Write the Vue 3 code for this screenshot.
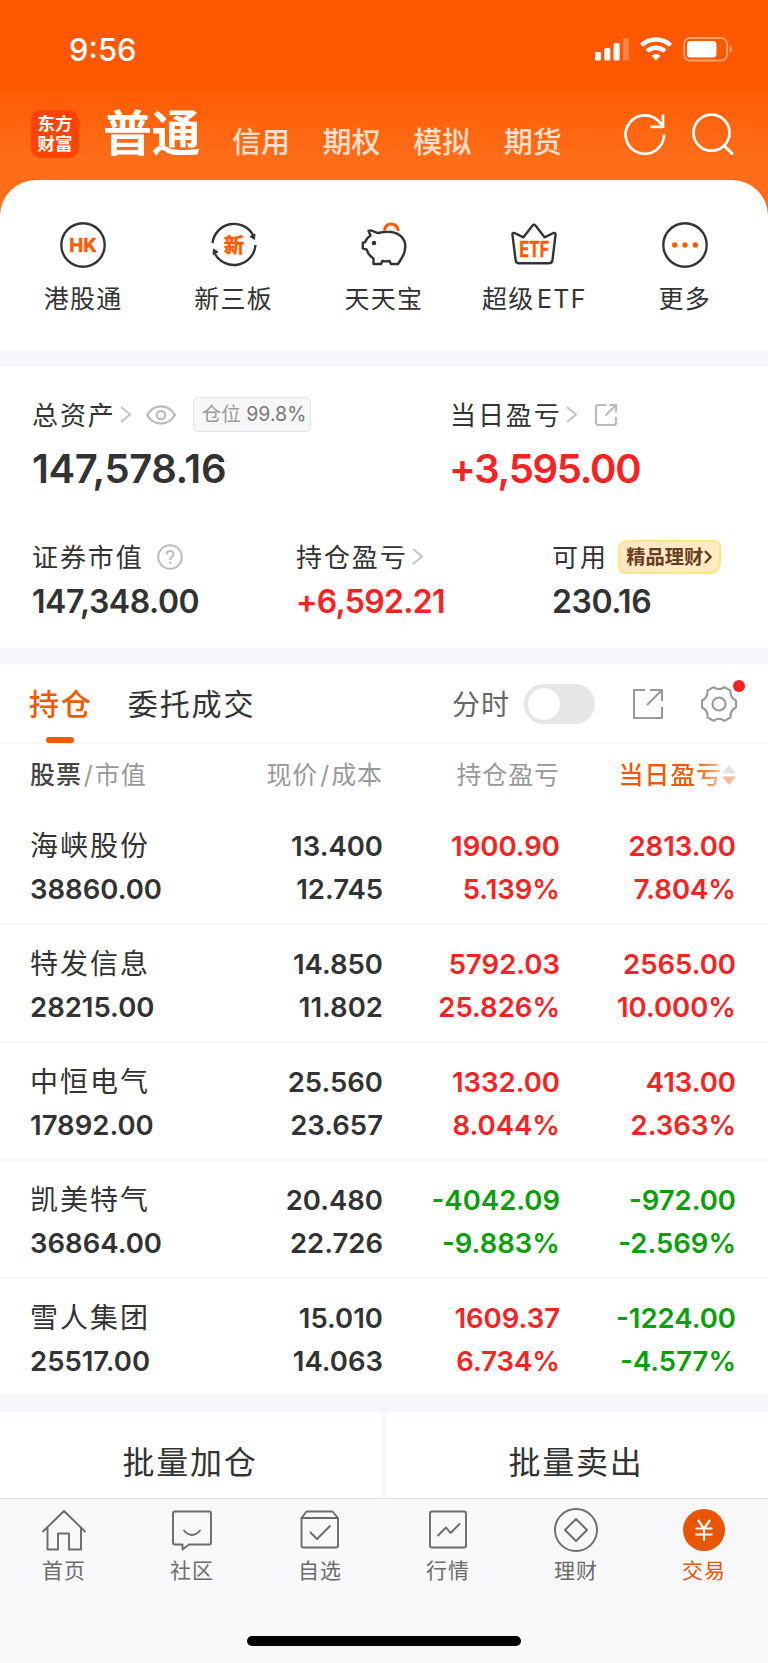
<template>
	<div class="app">
		<header class="top">
			<div class="status">
				<time>9:56</time>
				<svg class="signal" width="34" height="23" viewBox="0 0 34 23" fill="#fff">
					<rect x="0" y="14" width="6" height="8.500" rx="1.500" />
					<rect x="9.300" y="10" width="6" height="12.500" rx="1.500" />
					<rect x="18.600" y="5" width="6" height="17.500" rx="1.500" />
					<rect x="28" y="0" width="6" height="22.500" rx="1.500" opacity=".25" />
				</svg>
				<svg class="wifi" width="32" height="24" viewBox="0 0 32 24">
					<g fill="none" stroke="#fff" stroke-width="4.300">
						<path d="M1.500 8.300A21 21 0 0 1 30.500 8.300" />
						<path d="M7 14.200A13.500 13.500 0 0 1 25 14.200" />
					</g>
					<path d="M16 23.500L11.300 18.800A7 7 0 0 1 20.700 18.800Z" fill="#fff" />
				</svg>
				<svg class="battery" width="50" height="25" viewBox="0 0 50 25">
					<rect x="1" y="1" width="43" height="22.500" rx="6" fill="none" stroke="#fff" stroke-width="1.800" opacity=".45" />
					<rect x="4" y="4" width="29.500" height="16.500" rx="3.500" fill="#fff" />
					<path d="M46.500 8.500Q49 9.500 49 12.200Q49 15 46.500 16Z" fill="#fff" opacity=".45" />
				</svg>
			</div>
			<nav class="accounts">
				<div class="logo"><span>东方</span><span>财富</span></div>
				<strong>普通</strong>
				<a v-for="name of accounts" :key="name">{{name}}</a>
				<svg class="refresh" width="42" height="42" viewBox="0 0 42 42" fill="none" stroke="#fff" stroke-width="2.700">
					<path d="M40 21.500A19.200 19.200 0 1 1 36.500 10.500L39.500 13.500" />
					<path d="M39 1.500V13.800H26.500" />
				</svg>
				<svg class="search" width="43" height="43" viewBox="0 0 43 43" fill="none" stroke="#fff" stroke-width="2.700">
					<circle cx="19.500" cy="19.700" r="18" />
					<path d="M31.500 32L41 41.500" stroke-width="3" />
				</svg>
			</nav>
		</header>

		<section class="shortcuts">
			<a v-for="item of shortcuts" :key="item.icon">
				<svg width="48" height="48" viewBox="0 0 48 48" fill="none" stroke="#333" stroke-width="2.400" stroke-linejoin="round">
					<template v-if="item.icon === 'hk'">
						<circle cx="24" cy="24" r="21.700" />
						<text x="24" y="31" class="icon-text" font-size="19" textLength="27.500" lengthAdjust="spacingAndGlyphs">HK</text>
					</template>
					<template v-else-if="item.icon === 'new'">
						<path d="M2.500 22A21.700 21.700 0 0 1 43 14M45.500 24A21.700 21.700 0 0 1 5 33" />
						<path d="M45 13L44.500 18.500L40 15.500ZM3 33.500L3.500 28L8 31Z" fill="#333" stroke-width="1" />
						<text x="24" y="31.500" class="icon-text" font-size="20.500">新</text>
					</template>
					<template v-else-if="item.icon === 'pig'">
						<path d="M8.500 9.800Q11.500 9 15 11Q17.500 12.600 20.500 11.500Q25 10.500 31 11C40 12 45.500 18 45.300 26Q45 32 42 36.500L38 43H31L29.500 40Q25.500 40.700 22.300 40L21 43H13.500V37.500Q8 34 6.800 28.700L2.800 27.300V21.700L5 21.300Q6.500 17 10.500 14.500Z" />
						<circle cx="14" cy="22" r="2.300" fill="#333" stroke="none" />
						<path d="M24.300 9.700C26 0.500 36.500 1 38.300 9.700" stroke="#ff5a00" stroke-width="3.200" />
					</template>
					<template v-else-if="item.icon === 'etf'">
						<path d="M2.500 14Q2 11.500 4.500 12L13.500 16.300L22.500 4.500Q24 3 25.500 4.500L34.500 16.300L43.500 12Q46 11.500 45.500 14L42.500 39Q42 42.300 39 42.300H9Q6 42.300 5.600 39Z" />
						<text x="24.300" y="35.700" class="icon-text" font-size="21" textLength="30" lengthAdjust="spacingAndGlyphs">ETF</text>
					</template>
					<template v-else>
						<circle cx="24" cy="24" r="21.700" />
						<g fill="#ff5a00" stroke="none">
							<circle cx="13.700" cy="24" r="2.700" />
							<circle cx="24" cy="24" r="2.700" />
							<circle cx="34.300" cy="24" r="2.700" />
						</g>
					</template>
				</svg>
				<span>{{item.label}}</span>
			</a>
		</section>

		<section class="assets">
			<div class="asset total">
				<h3>
					总资产
					<svg class="chevron" viewBox="0 0 11 17"><path d="M1 1L10 8.500L1 16" /></svg>
					<svg class="eye" width="30" height="20" viewBox="0 0 30 20" fill="none" stroke="#bbb" stroke-width="2.200">
						<path d="M1 10C8-1.500 22-1.500 29 10C22 21.500 8 21.500 1 10Z" />
						<circle cx="15" cy="10" r="4.200" />
					</svg>
					<span class="position">仓位 <em>99.8%</em></span>
				</h3>
				<p>147,578.16</p>
			</div>
			<div class="asset total up">
				<h3>
					当日盈亏
					<svg class="chevron" viewBox="0 0 11 17"><path d="M1 1L10 8.500L1 16" /></svg>
					<svg class="share" width="24" height="24" viewBox="0 0 24 24" fill="none" stroke="#bbb" stroke-width="2.200">
						<path d="M12.500 2H4.500Q2 2 2 4.500V19.500Q2 22 4.500 22H19.500Q22 22 22 19.500V14M15.500 2H22V9.500M22 2L11.500 12.500" />
					</svg>
				</h3>
				<p>+3,595.00</p>
			</div>
			<div class="asset">
				<h3>
					证券市值
					<svg class="help" width="26" height="26" viewBox="0 0 26 26" fill="none" stroke="#bbb" stroke-width="2">
						<circle cx="13" cy="13" r="11.800" />
						<path d="M9.700 10.500C9.700 5.800 16.500 5.800 16.500 10.200C16.500 12.800 13.100 13 13.100 16M13.100 17.500V19.700" />
					</svg>
				</h3>
				<p>147,348.00</p>
			</div>
			<div class="asset up">
				<h3>
					持仓盈亏
					<svg class="chevron" viewBox="0 0 11 17"><path d="M1 1L10 8.500L1 16" /></svg>
				</h3>
				<p>+6,592.21</p>
			</div>
			<div class="asset">
				<h3>
					可用
					<span class="wealth">
						精品理财
						<svg width="8" height="14" viewBox="0 0 8 14" fill="none" stroke="#683d22" stroke-width="2.400"><path d="M1 1L6.500 7L1 13" /></svg>
					</span>
				</h3>
				<p>230.16</p>
			</div>
		</section>

		<section class="holdings">
			<div class="tabs">
				<b>持仓</b>
				<a>委托成交</a>
				<label>分时</label>
				<i class="switch"></i>
				<svg class="export" width="32" height="32" viewBox="0 0 32 32" fill="none" stroke="#999" stroke-width="2">
					<path d="M13 2H2V30H30V19M18 2H30V13M30 2L15 17" stroke-linejoin="round" />
				</svg>
				<span class="settings">
					<svg width="38" height="38" viewBox="0 0 38 38" fill="none" stroke="#999" stroke-width="2.100" stroke-linejoin="round">
						<path d="M13.500 2.200Q19 6.200 24.500 2.200L30.500 5.700Q29.800 12.700 36 15.500V22.500Q29.800 25.300 30.500 32.300L24.500 35.800Q19 31.800 13.500 35.800L7.500 32.300Q8.200 25.300 2 22.500V15.500Q8.200 12.700 7.500 5.700Z" />
						<circle cx="19" cy="19" r="6.500" />
					</svg>
				</span>
			</div>
			<div class="row head">
				<div><b>股票</b><s>/</s>市值</div>
				<div>现价<s>/</s>成本</div>
				<div>持仓盈亏</div>
				<div class="sorted">
					<span>当日盈亏</span>
					<svg width="14" height="22" viewBox="0 0 14 22"><path d="M7 1L14 9.500H0Z" fill="#e3e3e3" /><path d="M7 21L14 12.500H0Z" fill="#fbbd9a" /></svg>
				</div>
			</div>
			<div class="row" v-for="stock of stocks" :key="stock.name">
				<div><span class="name">{{stock.name}}</span><br />{{stock.value}}</div>
				<div>{{stock.price}}<br />{{stock.cost}}</div>
				<div :class="trend(stock.profit)">{{stock.profit[0]}}<br />{{stock.profit[1]}}</div>
				<div :class="trend(stock.today)">{{stock.today[0]}}<br />{{stock.today[1]}}</div>
			</div>
		</section>

		<section class="batch">
			<button>批量加仓</button>
			<button>批量卖出</button>
		</section>

		<footer>
			<nav>
				<a v-for="item of menu" :key="item.label" :class="{active: item.active}">
					<svg width="46" height="46" viewBox="0 0 46 46" fill="none" stroke="#6b6b6d" stroke-width="1.900" stroke-linejoin="round">
						<path v-for="d of item.paths" :key="d" :d="d" />
						<circle v-if="item.ring" cx="23" cy="23" r="21" />
						<template v-if="item.active">
							<circle cx="23" cy="23" r="21" fill="#ea5504" stroke="none" />
							<path d="M17 13L23 21.500L29 13M23 21V34M14.500 21.500H31.500M14.500 27.500H31.500" stroke="#fff" stroke-width="2.200" />
						</template>
					</svg>
					<span>{{item.label}}</span>
				</a>
			</nav>
			<div class="home-bar"></div>
		</footer>
	</div>
</template>

<style>
	body
	{
		margin: 0;
		background: #f8f8fb;
	}
</style>

<style scoped>
	.app
	{
		width: 768px;
		height: 1663px;
		overflow: hidden;
		display: flex;
		flex-direction: column;
		background: #f6f7fa;
		color: #333;
		font-family: Inter, "Noto Sans CJK SC", sans-serif;
	}

	.app *
	{
		box-sizing: border-box;
	}

	svg
	{
		display: block;
		flex: none;
	}

	h3, p
	{
		margin: 0;
		font-weight: normal;
	}

	.top
	{
		height: 216px;
		flex: none;
		background: linear-gradient(#ff5800 76px, #ff6d18 158px);
		color: #fff;
	}

	.status
	{
		height: 98px;
		padding: 0 35px 0 69px;
		display: flex;
		align-items: center;
	}

	.status time
	{
		flex: 1;
		font-size: 31px;
		font-weight: 500;
	}

	.wifi
	{
		margin: 0 11px;
	}

	.accounts
	{
		height: 72px;
		padding: 0 33px 0 31px;
		display: flex;
		align-items: center;
	}

	.logo
	{
		width: 48px;
		height: 48px;
		border-radius: 10px;
		background: #ff4300;
		display: flex;
		flex-direction: column;
		justify-content: center;
		align-items: center;
		font-size: 17.500px;
		font-weight: bold;
		line-height: 20px;
	}

	.accounts strong
	{
		margin: 0 32px 0 24px;
		font-size: 49px;
		line-height: 60px;
		letter-spacing: -0.5px;
	}

	.accounts a
	{
		width: 58px;
		margin: 17px 32.600px 0 0;
		font-size: 29px;
		line-height: 40px;
		font-weight: 500;
		white-space: nowrap;
		color: #ffe0cf;
	}

	.refresh
	{
		margin-left: auto;
	}

	.search
	{
		margin-left: 26px;
	}

	.shortcuts
	{
		height: 171px;
		flex: none;
		margin-top: -36px;
		padding: 41px 8px 0;
		border-radius: 36px 36px 0 0;
		background: #fff;
		display: grid;
		grid-template-columns: repeat(5, 150.400px);
	}

	.shortcuts a
	{
		display: flex;
		flex-direction: column;
		align-items: center;
	}

	.shortcuts span
	{
		margin-top: 12px;
		font-size: 25px;
		line-height: 36px;
		letter-spacing: 1.300px;
		word-spacing: -6px;
	}

	.icon-text
	{
		fill: #ff5a00;
		stroke: #ff5a00;
		stroke-width: 0.5px;
		font-weight: 700;
		text-anchor: middle;
	}

	.assets
	{
		height: 281px;
		flex: none;
		margin-top: 16px;
		padding: 29px 32px 0;
		background: #fff;
		display: grid;
		grid-template-columns: 264px 154px 102px 1fr;
		grid-template-rows: 142px 110px;
	}

	.asset:nth-child(1), .asset:nth-child(2)
	{
		grid-column: span 2;
	}

	.asset:nth-child(4)
	{
		grid-column: 2 / 4;
	}

	.asset h3
	{
		height: 36px;
		padding-bottom: 2px;
		display: flex;
		align-items: center;
		font-size: 26px;
		letter-spacing: 1.900px;
		white-space: nowrap;
	}

	.asset h3 > svg, .asset h3 > span
	{
		margin-top: 3px;
	}

	.asset p
	{
		margin-top: 5px;
		font-size: 32px;
		line-height: 46px;
		font-weight: 600;
		letter-spacing: -0.450px;
	}

	.asset.total p
	{
		margin-top: 14px;
		font-size: 40px;
		letter-spacing: -0.400px;
	}

	.asset.up p
	{
		letter-spacing: -0.700px;
	}

	.asset.total.up p
	{
		margin-left: -1px;
		letter-spacing: -1.300px;
	}

	.chevron
	{
		width: 11px;
		height: 17px;
		margin-left: 4px;
		fill: none;
		stroke: #c4c4c4;
		stroke-width: 2;
	}

	.eye
	{
		margin-left: 15px;
	}

	.position
	{
		width: 118px;
		height: 35px;
		margin-left: 17px;
		padding-left: 8px;
		border: 1px solid #e6e6e9;
		border-radius: 5px;
		background: #f7f7fa;
		color: #999;
		font-size: 19.500px;
		line-height: 33px;
		letter-spacing: 0;
	}

	.position em
	{
		color: #777;
		font-style: normal;
	}

	.share
	{
		margin-left: 17px;
	}

	.help
	{
		margin-left: 13px;
	}

	.wealth
	{
		width: 103px;
		height: 34px;
		margin-left: 10px;
		border: 2px solid #ffe780;
		border-radius: 9px 7px 11px 7px;
		background: linear-gradient(110deg, #fbe6c5, #feedc2);
		display: flex;
		align-items: center;
		justify-content: center;
		color: #683d22;
		font-size: 19.300px;
		font-weight: bold;
		letter-spacing: 0;
		line-height: 28px;
	}

	.wealth svg
	{
		margin: 1px 0 0 1px;
	}

	.up p, .row .up
	{
		color: #f82222;
	}

	.row .down
	{
		color: #0aa00a;
	}

	.holdings
	{
		margin-top: 16px;
		background: #fff;
	}

	.tabs
	{
		height: 80px;
		padding: 0 30px 0 29px;
		border-bottom: 2px solid #f7f7f9;
		display: flex;
		align-items: center;
		font-size: 30px;
		letter-spacing: 1.900px;
	}

	.tabs b
	{
		height: 80px;
		margin-right: 35px;
		font-weight: 500;
		line-height: 82px;
		color: #f15a00;
	}

	.tabs b::after
	{
		content: "";
		display: block;
		width: 28px;
		height: 6px;
		margin: -8px 0 0 17px;
		border-radius: 3px;
		background: #f15a00;
	}

	.tabs a
	{
		margin-top: -2px;
	}

	.tabs label
	{
		margin-left: auto;
		font-size: 28px;
		letter-spacing: 1px;
		color: #666;
	}

	.switch
	{
		width: 71px;
		height: 40px;
		margin: 2px 0 0 14px;
		padding: 4px;
		border-radius: 20px;
		background: #e5e6e8;
	}

	.switch::before
	{
		content: "";
		display: block;
		width: 32px;
		height: 32px;
		border-radius: 50%;
		background: #fff;
	}

	.export
	{
		margin: 2px 0 0 37px;
	}

	.settings
	{
		position: relative;
		margin: 2px 0 0 36px;
	}

	.settings::after
	{
		content: "";
		position: absolute;
		right: -7px;
		top: -5px;
		width: 12px;
		height: 12px;
		border-radius: 50%;
		background: #f92020;
	}

	.row
	{
		height: 118px;
		padding: 18px 32px 0 30px;
		border-bottom: 2px solid #f7f7f9;
		display: grid;
		grid-template-columns: 180px 173px 177px 176px;
		font-size: 27.500px;
		font-weight: 600;
		line-height: 43px;
		text-align: right;
	}

	.row div:first-child
	{
		text-align: left;
	}

	.row .name
	{
		font-size: 28px;
		font-weight: normal;
		letter-spacing: 2px;
	}

	.row.head
	{
		height: 63px;
		padding-top: 12px;
		border: 0;
		font-size: 25px;
		font-weight: normal;
		line-height: 38px;
		letter-spacing: 0.900px;
		color: #999;
	}

	.head b
	{
		font-weight: 500;
		color: #444;
	}

	.head s
	{
		margin: 0 1px 0 2px;
		text-decoration: none;
	}

	.head .sorted
	{
		height: 38px;
		display: flex;
		justify-content: flex-end;
		align-items: center;
	}

	.sorted span
	{
		font-weight: 500;
		color: transparent;
		background: linear-gradient(90deg, #f15a00 75%, #fbc3a3);
		background-clip: text;
	}

	.batch
	{
		height: 86px;
		flex: none;
		margin-top: 15px;
		display: grid;
		grid-template-columns: 1fr 1fr;
		gap: 4px;
	}

	.batch button
	{
		padding: 10px 2px 0 0;
		border: 0;
		background: #fff;
		color: #333;
		font: inherit;
		font-size: 32px;
		letter-spacing: 1.800px;
	}

	footer
	{
		flex: 1;
		border-top: 1px solid #dedee0;
		background: #f8f8fb;
	}

	footer nav
	{
		display: grid;
		grid-template-columns: repeat(6, 1fr);
		padding-top: 8px;
	}

	footer a
	{
		display: flex;
		flex-direction: column;
		align-items: center;
		font-size: 21px;
		line-height: 30px;
		letter-spacing: 1px;
		color: #6b6b6d;
	}

	footer span
	{
		margin-top: 3px;
	}

	footer .active
	{
		color: #ea5504;
	}

	.home-bar
	{
		width: 274px;
		height: 10px;
		margin: 50px auto 0;
		border-radius: 5px;
		background: #000;
	}
</style>

<script setup>
	import { ref } from "vue";


	const accounts = ["信用", "期权", "模拟", "期货"];

	const shortcuts = [
		{icon: "hk", label: "港股通"},
		{icon: "new", label: "新三板"},
		{icon: "pig", label: "天天宝"},
		{icon: "etf", label: "超级 ETF"},
		{icon: "more", label: "更多"},
	];

	const stocks = ref([
		{name: "海峡股份", value: "38860.00", price: "13.400", cost: "12.745", profit: ["1900.90", "5.139%"], today: ["2813.00", "7.804%"]},
		{name: "特发信息", value: "28215.00", price: "14.850", cost: "11.802", profit: ["5792.03", "25.826%"], today: ["2565.00", "10.000%"]},
		{name: "中恒电气", value: "17892.00", price: "25.560", cost: "23.657", profit: ["1332.00", "8.044%"], today: ["413.00", "2.363%"]},
		{name: "凯美特气", value: "36864.00", price: "20.480", cost: "22.726", profit: ["-4042.09", "-9.883%"], today: ["-972.00", "-2.569%"]},
		{name: "雪人集团", value: "25517.00", price: "15.010", cost: "14.063", profit: ["1609.37", "6.734%"], today: ["-1224.00", "-4.577%"]},
	]);

	const menu = [
		{label: "首页", paths: ["M1.500 25L23 4L44.500 25M6.500 21V42.500H17V26.500H28V42.500H40V21"]},
		{label: "社区", paths: ["M6 4.500H40Q42 4.500 42 6.500V35.500Q42 37.500 40 37.500H20L13.500 42.500V37.500H6Q4 37.500 4 35.500V6.500Q4 4.500 6 4.500Z", "M14.500 23Q23 33 31.500 23"]},
		{label: "自选", paths: ["M4.500 11L9.500 4.500H35.500L41 11V38.500Q41 40.500 39 40.500H6.500Q4.500 40.500 4.500 38.500ZM4.500 11H41", "M13 25L20 32L33.500 18.500"]},
		{label: "行情", paths: ["M7 4.500H39Q41 4.500 41 6.500V38.500Q41 40.500 39 40.500H7Q5 40.500 5 38.500V6.500Q5 4.500 7 4.500Z", "M12.500 29L21 20.500L25.500 26L35 16.500"]},
		{label: "理财", ring: true, paths: ["M23 12L34 23L23 34L12 23Z"]},
		{label: "交易", active: true},
	];


	const trend = pair => pair[0].startsWith("-") ? "down" : "up";
</script>
